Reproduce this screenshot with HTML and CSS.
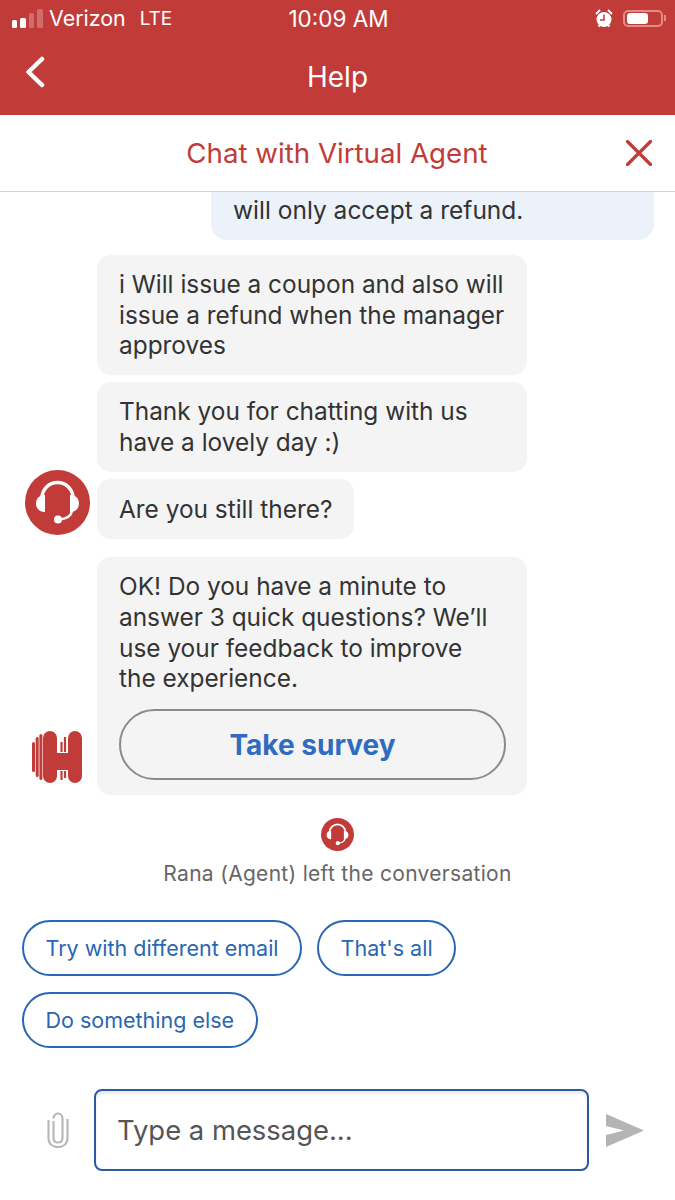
FILE: index.html
```html
<!DOCTYPE html>
<html lang="en">
<head>
    <meta charset="UTF-8">
    <meta name="viewport" content="width=device-width, initial-scale=1.0">
    <title>Help</title>
    <link rel="stylesheet" href="styles.css">
</head>
<body>

    <svg class="icon-defs" width="0" height="0">
        <symbol id="headset" viewBox="0 0 65 65">
            <circle cx="32.5" cy="32.5" r="32.5" fill="#c13c38"/>
            <path d="M17 36V28a15.500 15.500 0 0 1 31 0v8" fill="none" stroke="#fff" stroke-width="3.500"/>
            <path d="M20 25c-6 0-9 4-9 8.500s3 8.500 9 8.500z" fill="#fff"/>
            <path d="M45 25c6 0 9 4 9 8.500s-3 8.500-9 8.500z" fill="#fff"/>
            <path d="M47 41c-1 5-5 8-13 8.500" fill="none" stroke="#fff" stroke-width="2.500"/>
            <circle cx="33" cy="49.500" r="4" fill="#fff"/>
        </symbol>
    </svg>

    <header class="top-bar">
        <div class="status-bar">
            <div class="status-left">
                <svg class="signal" width="31" height="19" viewBox="0 0 31 19">
                    <rect x="0" y="11" width="5" height="8" rx="1.500" fill="#fff"/>
                    <rect x="8" y="9" width="6" height="10" rx="1.500" fill="#fff"/>
                    <rect x="17" y="4" width="5" height="15" rx="1.500" fill="#fff" opacity="0.25"/>
                    <rect x="25" y="0" width="6" height="19" rx="1.500" fill="#fff" opacity="0.25"/>
                </svg>
                <span class="carrier">Verizon</span>
                <span>LTE</span>
            </div>
            <div class="status-time">10:09 AM</div>
            <div class="status-right">
                <svg width="18" height="19" viewBox="0 0 18 19">
                    <circle cx="9" cy="10.500" r="7.500" fill="#fff"/>
                    <path d="M1 5l4-4M17 5l-4-4M3.500 17.500l2-2M14.500 17.500l-2-2" stroke="#fff" stroke-width="2"/>
                    <path d="M9 5.500v5.500H5" fill="none" stroke="#c13c38" stroke-width="1.500"/>
                </svg>
                <div class="battery"><div class="battery-fill"></div></div>
                <div class="battery-tip"></div>
            </div>
        </div>
        <div class="nav-bar">
            <svg class="back" width="22" height="32" viewBox="0 0 22 32">
                <path d="M18 3L4.500 16 18 29" fill="none" stroke="#fff" stroke-width="4.500" stroke-linecap="round" stroke-linejoin="round"/>
            </svg>
            <h1>Help</h1>
        </div>
    </header>

    <div class="chat-title">
        <h2>Chat with Virtual Agent</h2>
        <svg class="close" width="26" height="26" viewBox="0 0 26 26">
            <path d="M1.500 1.500l23 23M24.500 1.500l-23 23" stroke="#c13c38" stroke-width="3.200" stroke-linecap="round"/>
        </svg>
    </div>

    <main class="chat">
        <div class="user-msg">
            <p>will only accept a refund.</p>
        </div>

        <div class="agent-group">
            <div class="avatar">
                <svg width="65" height="65"><use href="#headset"/></svg>
            </div>
            <div class="bubbles">
                <div class="bubble">i Will issue a coupon and also will issue a refund when the manager approves</div>
                <div class="bubble">Thank you for chatting with us have a lovely day :)</div>
                <div class="bubble bubble-short">Are you still there?</div>
            </div>
        </div>

        <div class="agent-group bot-group">
            <div class="avatar bot-avatar">
                <svg width="50" height="52" viewBox="0 0 50 52">
                    <rect x="0" y="11" width="3" height="30" rx="1.500" fill="#c13c38"/>
                    <rect x="3.700" y="6" width="3" height="40" rx="1.500" fill="#c13c38"/>
                    <rect x="7.400" y="3" width="3" height="46" rx="1.500" fill="#c13c38"/>
                    <rect x="11" y="0" width="14" height="52" rx="7" fill="#c13c38"/>
                    <rect x="36" y="0" width="14" height="52" rx="7" fill="#c13c38"/>
                    <rect x="20" y="22" width="20" height="17" fill="#c13c38"/>
                    <path d="M29.500 21V11M33 21V6M29.500 40v9M33 40v7" fill="none" stroke="#c13c38" stroke-width="2.200"/>
                </svg>
            </div>
            <div class="bubbles">
                <div class="bubble bubble-survey">
                    OK! Do you have a minute to answer 3 quick questions? We’ll use your feedback to improve the experience.
                    <button class="survey-btn">Take survey</button>
                </div>
            </div>
        </div>

        <div class="left-note">
            <svg width="33" height="33"><use href="#headset"/></svg>
            <span>Rana (Agent) left the conversation</span>
        </div>

        <div class="chips">
            <button class="chip">Try with different email</button>
            <button class="chip">That's all</button>
            <button class="chip">Do something else</button>
        </div>
    </main>

    <footer class="composer">
        <svg class="clip" width="22" height="36" viewBox="0 0 22 36">
            <path d="M6.500 9v17c0 3 2 4.500 4.500 4.500s4.500-1.500 4.500-4.500V6.500c0-3-2-5-4.500-5s-4.500 2-4.500 5" fill="none" stroke="#b8b8b8" stroke-width="2.200"/>
            <path d="M1.500 8v18c0 6 4 9 9.500 9s9.500-3 9.500-9V7" fill="none" stroke="#b8b8b8" stroke-width="2.200"/>
        </svg>
        <div class="message-input">Type a message...</div>
        <svg class="send" width="38" height="33" viewBox="0 0 38 33">
            <path d="M0 0l38 16.500L0 33v-12l18-4.500L0 12z" fill="#b4b4b4"/>
        </svg>
    </footer>

</body>
</html>
```

FILE: styles.css
```css
html, body {
    margin: 0;
    padding: 0;
}
body {
    width: 675px;
    height: 1200px;
    overflow: hidden;
    background: #fff;
    font-family: Inter, "Liberation Sans", sans-serif;
    color: #333;
}
.icon-defs {
    display: block;
    height: 0;
}
h1, h2, p {
    margin: 0;
    font-weight: 400;
}
button {
    font-family: inherit;
    background: #fff;
    cursor: pointer;
}

.top-bar {
    height: 115px;
    background: #c13c38;
    color: #fff;
}
.status-bar {
    height: 38px;
    box-sizing: border-box;
    padding: 0 9px 2px 12px;
    display: grid;
    grid-template-columns: 1fr auto 1fr;
    align-items: center;
    font-size: 19px;
}
.status-left {
    display: flex;
    align-items: center;
}
.carrier {
    margin: 0 14px 0 6px;
    font-size: 21.400px;
}
.status-time {
    font-size: 22.500px;
    margin-right: 1px;
}
.status-right {
    display: flex;
    align-items: center;
    justify-content: flex-end;
}
.battery {
    width: 40px;
    height: 17px;
    box-sizing: border-box;
    margin-left: 10px;
    padding: 1px 2px;
    border: 2px solid #e58a86;
    border-radius: 5px;
}
.battery-fill {
    width: 21px;
    height: 100%;
    background: #fff;
    border-radius: 3px;
}
.battery-tip {
    width: 2px;
    height: 6px;
    margin-left: 1px;
    background: #e58a86;
}
.nav-bar {
    height: 77px;
    padding: 0 24px;
    display: grid;
    grid-template-columns: 1fr auto 1fr;
    align-items: center;
}
.nav-bar h1 {
    grid-column: 2;
    grid-row: 1;
    font-size: 28px;
    margin-top: 1px;
}
.back {
    grid-column: 1;
    grid-row: 1;
    margin-bottom: 10px;
}

.chat-title {
    height: 76px;
    padding: 0 23px 0 22px;
    display: grid;
    grid-template-columns: 1fr auto 1fr;
    align-items: center;
    border-bottom: 1px solid #d2d2d2;
}
.chat-title h2 {
    grid-column: 2;
    font-size: 27.700px;
    color: #c13c38;
}
.close {
    justify-self: end;
}

.chat {
    height: 897px;
    overflow: hidden;
}
.user-msg {
    margin: 0 21px 15px 211px;
    height: 45px;
    padding: 3px 0 0 22px;
    background: #ebf2fa;
    border-radius: 0 0 16px 16px;
    font-size: 24.500px;
    line-height: 30px;
}
.agent-group {
    display: flex;
    align-items: flex-end;
    padding-left: 25px;
}
.bot-group {
    margin-top: 18px;
}
.avatar {
    width: 72px;
    flex-shrink: 0;
    display: flex;
    margin-bottom: 4px;
}
.bot-avatar {
    padding-left: 7px;
    width: 65px;
    margin-bottom: 12px;
}
.bubbles {
    display: flex;
    flex-direction: column;
    align-items: flex-start;
    gap: 7px;
}
.bubble {
    width: 430px;
    box-sizing: border-box;
    padding: 14px 16px 14px 22px;
    background: #f4f4f4;
    border-radius: 14px;
    font-size: 24.400px;
    line-height: 30.700px;
}
.bubble-short {
    width: auto;
    padding: 15px 22px;
}
.bubble-survey {
    padding-right: 22px;
}
.survey-btn {
    display: block;
    width: 387px;
    height: 71px;
    margin: 15px 0 1px;
    border: 2px solid #8a8a8a;
    border-radius: 36px;
    background: #f4f4f4;
    color: #2f6cbf;
    font-size: 28px;
    font-weight: 700;
}

.left-note {
    margin-top: 23px;
    display: flex;
    flex-direction: column;
    align-items: center;
    gap: 10px;
    font-size: 21px;
    line-height: 26px;
    letter-spacing: 0.3px;
    color: #666;
}
.chips {
    margin-top: 33px;
    padding: 0 22px;
    display: flex;
    flex-wrap: wrap;
    gap: 16px 15px;
    width: 480px;
}
.chip {
    height: 56px;
    padding: 0 21.500px;
    border: 2px solid #2a66b3;
    border-radius: 29px;
    color: #2a66b3;
    font-size: 21.500px;
}

.composer {
    height: 82px;
    display: flex;
    align-items: center;
}
.clip {
    margin: 0 25px 0 47px;
    flex-shrink: 0;
}
.message-input {
    width: 495px;
    height: 82px;
    box-sizing: border-box;
    padding: 0 21px;
    display: flex;
    align-items: center;
    border: 2px solid #2a5a9f;
    border-radius: 8px;
    box-shadow: inset 0 3px 3px rgba(0, 0, 0, 0.08);
    font-size: 27.400px;
    color: #555;
}
.send {
    margin-left: 17px;
}
```
